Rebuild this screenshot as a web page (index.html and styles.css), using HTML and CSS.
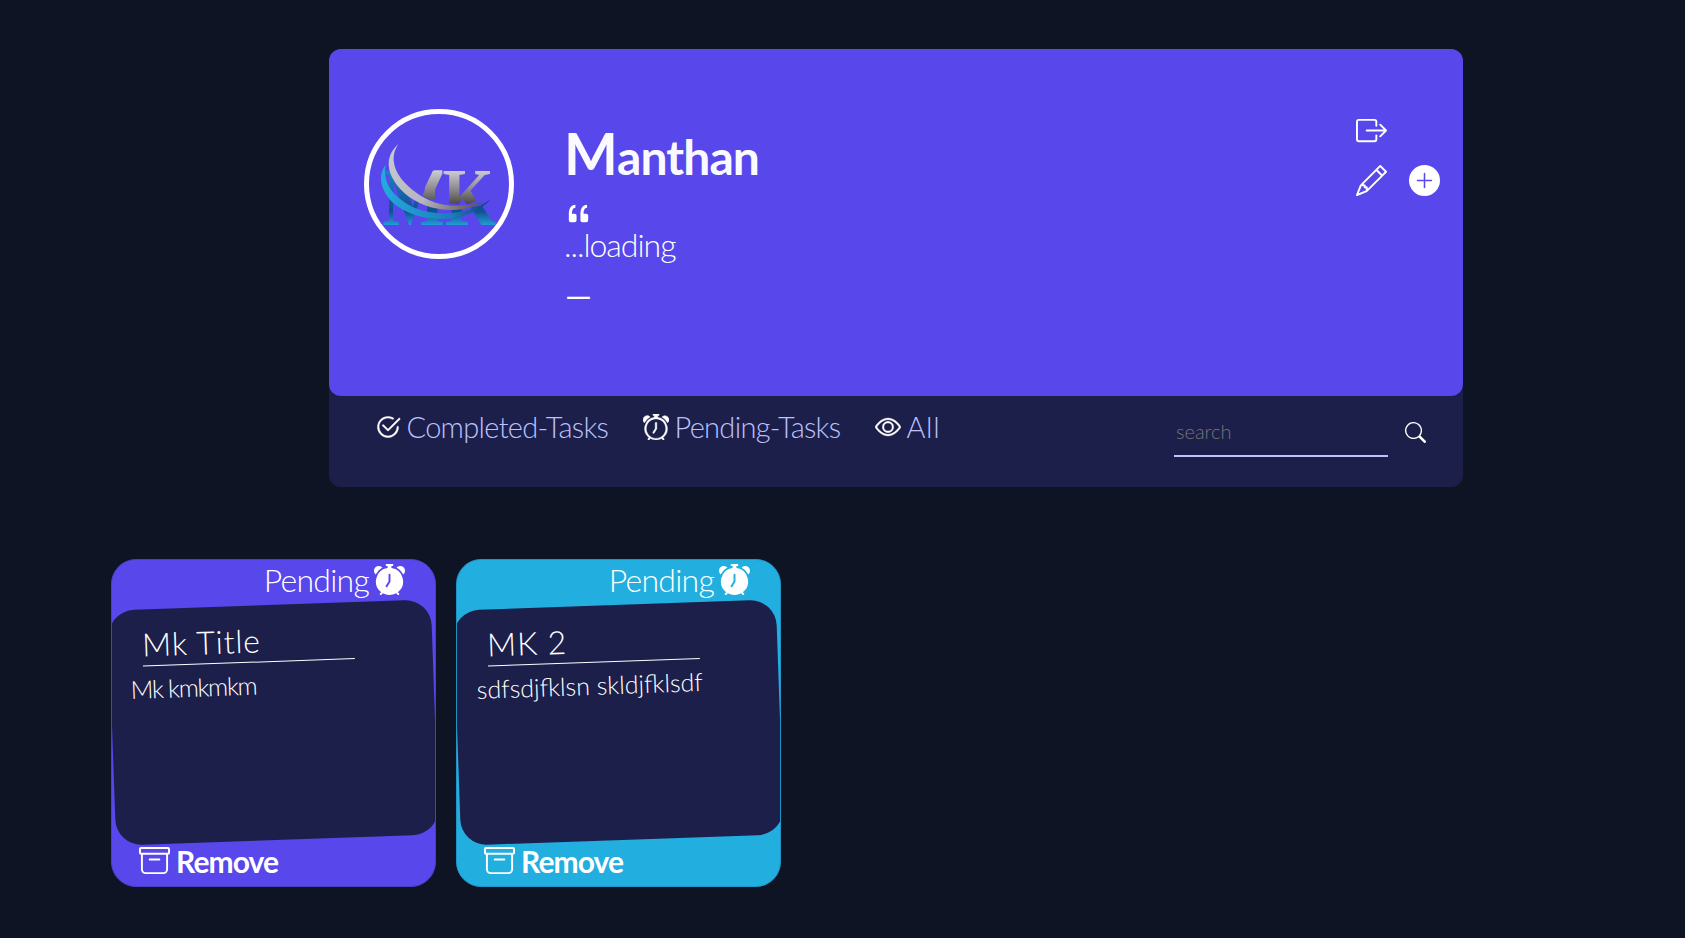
FILE: index.html
```html
<!DOCTYPE html>
<html lang="en">
<head>
<meta charset="utf-8">
<title>Tasks</title>
<link rel="stylesheet" href="styles.css">
</head>
<body>
<svg class="defs" width="0" height="0">
  <symbol id="i-exit" viewBox="0 0 16 16"><path d="M10 12.5a.5.5 0 0 1-.5.5h-8a.5.5 0 0 1-.5-.5v-9a.5.5 0 0 1 .5-.5h8a.5.5 0 0 1 .5.5v2a.5.5 0 0 0 1 0v-2A1.5 1.5 0 0 0 9.5 2h-8A1.5 1.5 0 0 0 0 3.5v9A1.5 1.5 0 0 0 1.5 14h8a1.5 1.5 0 0 0 1.5-1.5v-2a.5.5 0 0 0-1 0v2z"/><path d="M15.854 8.354a.5.5 0 0 0 0-.708l-3-3a.5.5 0 0 0-.708.708L14.293 7.5H5.5a.5.5 0 0 0 0 1h8.793l-2.147 2.146a.5.5 0 0 0 .708.708l3-3z"/></symbol>
  <symbol id="i-pencil" viewBox="0 0 16 16"><path d="M12.146.146a.5.5 0 0 1 .708 0l3 3a.5.5 0 0 1 0 .708l-10 10a.5.5 0 0 1-.168.11l-5 2a.5.5 0 0 1-.65-.65l2-5a.5.5 0 0 1 .11-.168l10-10zM11.207 2.5 13.5 4.793 14.793 3.5 12.5 1.207 11.207 2.5zm1.586 3L10.5 3.207 4 9.707V10h.5a.5.5 0 0 1 .5.5v.5h.5a.5.5 0 0 1 .5.5v.5h.293l6.5-6.5zm-9.761 5.175-.106.106-1.528 3.821 3.821-1.528.106-.106A.5.5 0 0 1 5 12.5V12h-.5a.5.5 0 0 1-.5-.5V11h-.5a.5.5 0 0 1-.468-.325z"/></symbol>
  <symbol id="i-plus" viewBox="0 0 16 16"><path d="M16 8A8 8 0 1 1 0 8a8 8 0 0 1 16 0zM8.4 4.4a.4.4 0 0 0-.8 0v3.200H4.4a.4.4 0 0 0 0 .8h3.200v3.200a.4.4 0 0 0 .8 0V8.400h3.200a.4.4 0 0 0 0-.8H8.400V4.400z"/></symbol>
  <symbol id="i-check" viewBox="0 0 16 16"><path d="M2.5 8a5.5 5.5 0 0 1 8.25-4.764.5.5 0 0 0 .5-.866A6.5 6.5 0 1 0 14.5 8a.5.5 0 0 0-1 0 5.5 5.5 0 1 1-11 0z"/><path d="M15.354 3.354a.5.5 0 0 0-.708-.708L8 9.293 5.354 6.646a.5.5 0 1 0-.708.708l3 3a.5.5 0 0 0 .708 0l7-7z"/></symbol>
  <symbol id="i-alarm" viewBox="0 0 16 16"><path d="M8.5 5.5a.5.5 0 0 0-1 0v3.362l-1.429 2.38a.5.5 0 1 0 .858.515l1.5-2.5A.5.5 0 0 0 8.5 9V5.5z"/><path d="M6.5 0a.5.5 0 0 0 0 1H7v1.07a7.001 7.001 0 0 0-3.273 12.474l-.602.602a.5.5 0 0 0 .707.708l.746-.746A6.97 6.97 0 0 0 8 16a6.97 6.97 0 0 0 3.422-.892l.746.746a.5.5 0 0 0 .707-.708l-.601-.602A7.001 7.001 0 0 0 9 2.07V1h.5a.5.5 0 0 0 0-1h-3zm1.038 3.018a6.093 6.093 0 0 1 .924 0 6 6 0 1 1-.924 0zM0 3.5c0 .753.333 1.429.86 1.887A8.035 8.035 0 0 1 4.387 1.86 2.5 2.5 0 0 0 0 3.5zM13.5 1c-.753 0-1.429.333-1.887.86a8.035 8.035 0 0 1 3.527 3.527A2.5 2.5 0 0 0 13.5 1z"/></symbol>
  <symbol id="i-alarm-fill" viewBox="0 0 16 16"><path d="M6 .5a.5.5 0 0 1 .5-.5h3a.5.5 0 0 1 0 1H9v1.07a7.001 7.001 0 0 1 3.274 12.474l.601.602a.5.5 0 0 1-.707.708l-.746-.746A6.97 6.97 0 0 1 8 16a6.97 6.97 0 0 1-3.422-.892l-.746.746a.5.5 0 0 1-.707-.708l.602-.602A7.001 7.001 0 0 1 7 2.07V1h-.5A.5.5 0 0 1 6 .5zm2.5 5a.5.5 0 0 0-1 0v3.362l-1.429 2.38a.5.5 0 1 0 .858.515l1.5-2.5A.5.5 0 0 0 8.5 9V5.5zM.86 5.387A2.5 2.5 0 1 1 4.387 1.86 8.035 8.035 0 0 0 .86 5.387zM11.613 1.86a2.5 2.5 0 1 1 3.527 3.527 8.035 8.035 0 0 0-3.527-3.527z"/></symbol>
  <symbol id="i-eye" viewBox="0 0 16 16"><path d="M16 8s-3-5.5-8-5.5S0 8 0 8s3 5.5 8 5.5S16 8 16 8zM1.173 8a13.133 13.133 0 0 1 1.66-2.043C4.12 4.668 5.88 3.5 8 3.5c2.12 0 3.879 1.168 5.168 2.457A13.133 13.133 0 0 1 14.828 8c-.058.087-.122.183-.195.288-.335.48-.83 1.12-1.465 1.755C11.879 11.332 10.119 12.5 8 12.5c-2.12 0-3.879-1.168-5.168-2.457A13.134 13.134 0 0 1 1.172 8z"/><path d="M8 5.5a2.5 2.5 0 1 0 0 5 2.5 2.5 0 0 0 0-5zM4.5 8a3.5 3.5 0 1 1 7 0 3.5 3.5 0 0 1-7 0z"/></symbol>
  <symbol id="i-search" viewBox="0 0 16 16"><path d="M11.742 10.344a6.5 6.5 0 1 0-1.397 1.398h-.001c.03.04.062.078.098.115l3.85 3.85a1 1 0 0 0 1.415-1.414l-3.85-3.85a1.007 1.007 0 0 0-.115-.1zM12 6.5a5.5 5.5 0 1 1-11 0 5.5 5.5 0 0 1 11 0z"/></symbol>
  <symbol id="i-archive" viewBox="0 0 16 16"><path d="M0 2a1 1 0 0 1 1-1h14a1 1 0 0 1 1 1v2a1 1 0 0 1-1 1v7.5a2.5 2.5 0 0 1-2.5 2.5h-9A2.5 2.5 0 0 1 1 12.5V5a1 1 0 0 1-1-1V2zm2 3v7.5A1.5 1.5 0 0 0 3.5 14h9a1.5 1.5 0 0 0 1.5-1.5V5H2zm13-3H1v2h14V2zM5 7.5a.5.5 0 0 1 .5-.5h5a.5.5 0 0 1 0 1h-5a.5.5 0 0 1-.5-.5z"/></symbol>
  <symbol id="i-quote" viewBox="0 0 16 16"><path d="M12 12a1 1 0 0 0 1-1V8.558a1 1 0 0 0-1-1h-1.388c0-.351.021-.703.062-1.054.062-.372.166-.703.31-.992.145-.29.331-.517.559-.683.227-.186.516-.279.868-.279V3c-.579 0-1.085.124-1.52.372a3.322 3.322 0 0 0-1.085.992 4.92 4.92 0 0 0-.62 1.458A7.712 7.712 0 0 0 9 7.558V11a1 1 0 0 0 1 1h2Zm-6 0a1 1 0 0 0 1-1V8.558a1 1 0 0 0-1-1H4.612c0-.351.021-.703.062-1.054.062-.372.166-.703.31-.992.145-.29.331-.517.559-.683.227-.186.516-.279.868-.279V3c-.579 0-1.085.124-1.52.372a3.322 3.322 0 0 0-1.085.992 4.92 4.92 0 0 0-.62 1.458A7.712 7.712 0 0 0 3 7.558V11a1 1 0 0 0 1 1h2Z"/></symbol>
</svg>

<header class="board">
  <section class="profile">
    <svg class="avatar" viewBox="42 43 420 420">
      <defs>
        <linearGradient id="silver" x1="0" y1="205" x2="0" y2="325" gradientUnits="userSpaceOnUse"><stop offset="0" stop-color="#d6d6de"/><stop offset=".5" stop-color="#908e92"/><stop offset="1" stop-color="#3e3838"/></linearGradient>
        <linearGradient id="silver2" x1="100" y1="150" x2="390" y2="320" gradientUnits="userSpaceOnUse"><stop offset="0" stop-color="#c9c9d2"/><stop offset=".5" stop-color="#b5b5bd"/><stop offset="1" stop-color="#4e4646"/></linearGradient>
        <linearGradient id="blue" x1="80" y1="0" x2="425" y2="0" gradientUnits="userSpaceOnUse"><stop offset="0" stop-color="#25a9e0"/><stop offset=".6" stop-color="#1b7fbd"/><stop offset="1" stop-color="#0b3472"/></linearGradient>
        <linearGradient id="blue2" x1="0" y1="210" x2="0" y2="375" gradientUnits="userSpaceOnUse"><stop offset="0" stop-color="#1b86c4"/><stop offset=".75" stop-color="#0f4f92"/><stop offset="1" stop-color="#209ad2"/></linearGradient>
        <clipPath id="above"><path d="M240 200L200 284C240 306 310 320 345 312L470 250V200Z"/></clipPath>
        <clipPath id="below"><path d="M60 180L98 180C105 225 140 280 180 303C240 335 320 338 400 310L450 400H60Z"/></clipPath>
      </defs>
      <text class="mark" x="82" y="375" textLength="342" lengthAdjust="spacingAndGlyphs" fill="url(#blue2)" clip-path="url(#below)">MK</text>
      <text class="mark" x="75" y="375" textLength="342" lengthAdjust="spacingAndGlyphs" fill="url(#silver)" clip-path="url(#above)">MK</text>
      <path fill="url(#silver)" d="M236 212H262V222L226 300L202 288Z"/>
      <path fill="url(#blue)" d="M92 196C66 225 74 285 135 325C215 375 345 370 408 298C350 342 250 355 180 325C115 295 82 250 92 196Z"/>
      <path fill="url(#silver2)" d="M130 133C88 170 90 225 148 280C205 332 310 350 387 306C310 328 240 322 180 276C115 228 102 175 130 133Z"/>
    </svg>
    <div class="who">
      <h1 class="name">Manthan</h1>
      <svg class="icon quote"><use href="#i-quote"/></svg>
      <p class="saying">...loading</p>
      <p class="author">—</p>
    </div>
    <div class="actions">
      <svg class="icon"><use href="#i-exit"/></svg>
      <div class="row">
        <svg class="icon"><use href="#i-pencil"/></svg>
        <svg class="icon"><use href="#i-plus"/></svg>
      </div>
    </div>
  </section>
  <nav class="filters">
    <a class="filter done"><svg class="icon"><use href="#i-check"/></svg><span>Completed-Tasks</span></a>
    <a class="filter pend"><svg class="icon"><use href="#i-alarm"/></svg><span>Pending-Tasks</span></a>
    <a class="filter all"><svg class="icon"><use href="#i-eye"/></svg><span>All</span></a>
    <form class="search">
      <input type="text" placeholder="search">
      <svg class="icon"><use href="#i-search"/></svg>
    </form>
  </nav>
</header>

<main class="cards">
  <article class="card violet">
    <div class="status"><span>Pending</span><svg class="icon"><use href="#i-alarm-fill"/></svg></div>
    <div class="note">
      <h2 class="title">Mk Title</h2>
      <p class="text tight">Mk kmkmkm</p>
    </div>
    <div class="remove"><svg class="icon"><use href="#i-archive"/></svg><span>Remove</span></div>
  </article>
  <article class="card cyan">
    <div class="status"><span>Pending</span><svg class="icon"><use href="#i-alarm-fill"/></svg></div>
    <div class="note">
      <h2 class="title">MK 2</h2>
      <p class="text">sdfsdjfklsn skldjfklsdf</p>
    </div>
    <div class="remove"><svg class="icon"><use href="#i-archive"/></svg><span>Remove</span></div>
  </article>
</main>
</body>
</html>
```

FILE: styles.css
```css
* { box-sizing: border-box; margin: 0; padding: 0; }

body {
  min-height: 938px;
  padding: 49.4px 0 0;
  background: hsl(226, 43%, 10%);
  color: #fff;
  font-family: Papyrus, Lato, sans-serif;
  font-weight: 300;
  overflow: hidden;
}

.defs { display: none; }
.icon { display: block; flex: none; width: 31px; height: 31px; fill: currentColor; }

.board {
  width: 1134px;
  height: 437.6px;
  margin-left: 329px;
  border-radius: 12px;
  background: hsl(235, 46%, 20%);
}

.profile {
  display: flex;
  height: 347px;
  padding: 60px 23px 0 35px;
  border-radius: 12px;
  background: hsl(246, 80%, 60%);
}

.avatar { flex: none; width: 150px; height: 150px; border: 5px solid #fff; border-radius: 50%; }
.mark { font: bold 247px "Liberation Serif", serif; }

.who { flex: 1; padding: 14.5px 0 0 50px; }
.name { height: 75px; line-height: 65px; font-size: 48px; font-weight: 700; letter-spacing: -0.9px; color: #f9faff; }
.name::first-letter { font-size: 57px; line-height: 48px; }
.quote { margin: 0 0 0 -1px; }
.saying { height: 48px; margin-top: -1px; line-height: 32px; font-size: 32px; letter-spacing: -1px; }
.author { line-height: 35px; font-size: 34px; font-weight: 400; margin-left: 1px; }

.actions { display: flex; flex-direction: column; gap: 19px; padding-top: 5.6px; }
.row { display: flex; gap: 22px; }

.filters { display: flex; height: 90px; padding: 18px 35px 0 46px; }
.filter { display: flex; height: 26px; color: hsl(236, 100%, 87%); font-size: 29px; line-height: 26px; letter-spacing: -0.7px; white-space: nowrap; }
.filter .icon { width: 26px; height: 26px; margin-right: 5.5px; color: #fff; stroke: #fff; stroke-width: .25; overflow: visible; }
.done { width: 268px; }
.pend { width: 232px; }
.all { width: 299px; letter-spacing: 0.7px; }

.search { display: flex; gap: 16.5px; padding-top: 4px; }
.search input {
  width: 214px;
  height: 38.5px;
  padding: 0 3px 12px 2px;
  border: 0;
  border-bottom: 2px solid hsl(236, 100%, 87%);
  background: transparent;
  color: #fff;
  font: inherit;
  font-size: 20px;
}
.search input::placeholder { color: #757575; }
.search .icon { width: 21px; height: 21px; margin-top: 4px; }

.cards { display: flex; gap: 20px; margin: 72px 0 0 111px; }
.card {
  display: flex;
  flex-direction: column;
  width: 325px;
  height: 328.5px;
  border: 1px solid;
  border-radius: 25px;
  overflow: hidden;
}
.violet { background: hsl(246, 80%, 60%); border-color: #4a3fc4; }
.cyan { background: #22aedf; border-color: #2094c4; }

.status { display: flex; justify-content: flex-end; gap: 5px; height: 45px; padding: 4px 30px 0 0; font-size: 32px; line-height: 31px; letter-spacing: -0.75px; }
.note { flex: none; height: 235px; padding: 22px 22px 0; border-radius: 26px; background: hsl(235, 46%, 20%); transform: rotate(-2deg); }
.title { width: 212px; height: 35px; margin-left: 11px; border-bottom: 1px solid #fff; font-size: 32px; font-weight: 300; line-height: 26px; letter-spacing: 0.8px; white-space: nowrap; }
.text { margin: 4px 0 0 -1px; font-size: 25px; line-height: 37px; white-space: nowrap; }
.tight { margin-left: -2px; letter-spacing: -1.3px; }
.remove { display: flex; gap: 6px; padding: 5px 0 0 27px; font-size: 30px; font-weight: 700; line-height: 33px; letter-spacing: -0.9px; }
```
